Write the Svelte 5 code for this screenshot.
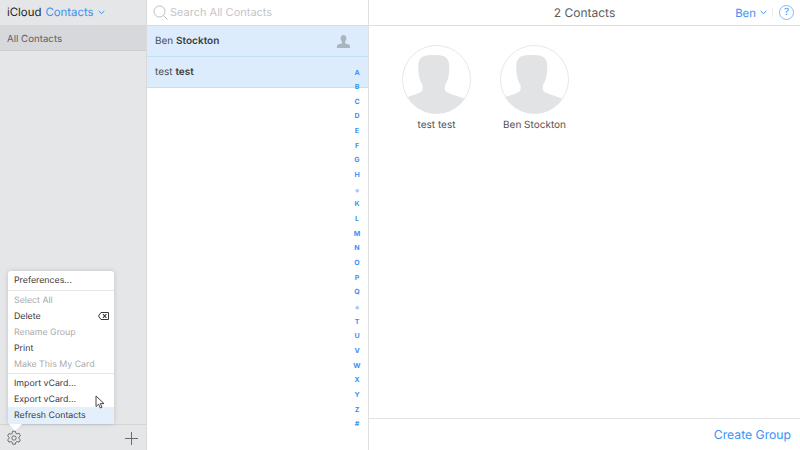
<script lang="ts">
const letters = ['A','B','C','D','E','F','G','H','•','K','L','M','N','O','P','Q','•','T','U','V','W','X','Y','Z','#'];

const menuGroups = [
	[{ label: 'Preferences...' }],
	[
		{ label: 'Select All', off: true },
		{ label: 'Delete', del: true },
		{ label: 'Rename Group', off: true },
		{ label: 'Print' },
		{ label: 'Make This My Card', off: true },
	],
	[{ label: 'Import vCard...' }, { label: 'Export vCard...' }, { label: 'Refresh Contacts', hover: true }],
];

const contacts = [
	{ first: 'Ben', last: 'Stockton', me: true },
	{ first: 'test', last: 'test', me: false },
];
const cards = ['test test', 'Ben Stockton'];
</script>

<div class="app">
	<aside class="sidebar">
		<div class="side-head">
			<span class="brand">iCloud</span>
			<span class="app-name">Contacts</span>
			<svg width="7" height="5" viewBox="0 0 7 5" fill="none" stroke="#3b91f5" stroke-width="1">
				<polyline points="0.7 1 3.5 3.6 6.3 1" />
			</svg>
		</div>
		<div class="group-row">All Contacts</div>
		<div class="side-space"></div>
		<div class="side-foot">
			<svg width="16" height="16" viewBox="0 0 16 16" fill="none" stroke="#5f6266" stroke-width="0.9">
				<path d="M6.6 1.2h2.8l.4 2 1.3.7 1.9-.7 1.4 2.4-1.5 1.3v1.6l1.5 1.3-1.4 2.4-1.9-.7-1.3.7-.4 2H6.600l-.4-2-1.3-.7-1.900.7-1.400-2.400 1.500-1.300V7.200L1.600 5.900 3 3.500l1.900.7 1.300-.7z" stroke-linejoin="round" />
				<circle cx="8" cy="8" r="2.200" />
			</svg>
			<svg width="13" height="13" viewBox="0 0 13 13" stroke="#6a6d70" stroke-width="1">
				<path d="M6.500 0v13M0 6.500h13" />
			</svg>
		</div>

		<div class="menu">
			{#each menuGroups as group}
				<div class="menu-group">
					{#each group as item}
						<div class="menu-item" class:off={item.off} class:hover={item.hover}>
							{item.label}
							{#if item.del}
								<svg width="11" height="8" viewBox="0 0 11 8" fill="none" stroke="#3a3a3c">
									<path d="M3 .5h7.500v7H3L.5 4z" stroke-width="1" stroke-linejoin="round" />
									<path d="M5 2.200l3.400 3.600M8.400 2.200L5 5.800" stroke-width="1.100" />
								</svg>
							{/if}
						</div>
					{/each}
				</div>
			{/each}
			<span class="menu-tail"></span>
		</div>
		<svg class="cursor" width="10" height="14" viewBox="0 0 10 14">
			<path d="M1 1v10.500l2.600-2.300 1.700 3.800 1.700-.8-1.700-3.600H9z" fill="#fff" stroke="#333" stroke-width="0.9" stroke-linejoin="round" />
		</svg>
	</aside>

	<section class="list">
		<div class="search">
			<svg width="15" height="15" viewBox="0 0 15 15" fill="none" stroke="#bcbec1" stroke-width="1">
				<circle cx="6.500" cy="6.500" r="5.500" />
				<path d="M10.500 10.500l4 4" />
			</svg>
			<span>Search All Contacts</span>
		</div>
		{#each contacts as c}
			<div class="row">
				<span>{c.first} <b>{c.last}</b></span>
				{#if c.me}
					<svg width="13" height="13" viewBox="0 0 13 13" fill="#a9b5bf">
						<path d="M6.500 0C8.300 0 9.400 1.300 9.400 3.300c0 1.500-.6 2.800-1.400 3.500v1.400c1.800.6 5 1 5 3V13H0v-1.800c0-2 3.200-2.400 5-3V6.800C4.200 6.100 3.600 4.800 3.600 3.300 3.600 1.300 4.700 0 6.500 0z" />
					</svg>
				{/if}
			</div>
		{/each}
		<div class="alpha">
			{#each letters as l}
				<span class:dot={l === '•'}>{l}</span>
			{/each}
		</div>
	</section>

	<main class="detail">
		<header class="detail-head">
			<span class="count">2 Contacts</span>
			<div class="user">
				<span>Ben</span>
				<svg width="7" height="5" viewBox="0 0 7 5" fill="none" stroke="#3b91f5" stroke-width="1">
					<polyline points="0.7 1 3.500 3.600 6.300 1" />
				</svg>
				<i class="divider"></i>
				<span class="help">?</span>
			</div>
		</header>
		<div class="cards">
			{#each cards as name, i}
				<div class="card">
					<svg width="69" height="69" viewBox="0 0 69 69">
						<defs>
							<clipPath id="round-{i}">
								<circle cx="34.500" cy="34.500" r="34" />
							</clipPath>
						</defs>
						<circle cx="34.500" cy="34.500" r="34" fill="#fff" stroke="#e6e7e8" stroke-width="1" />
						<path
							clip-path="url(#round-{i})"
							fill="#e2e3e5"
							d="M34.500 10c9 0 12.800 3.500 12.800 12 0 3-.2 5.500-.6 8-.6 4-2 7.500-3.700 10-.4 2.500-.2 4.500.5 6 2 2.500 11 4.500 20 8V69H0V54c9-3.500 18-5.500 20-8 .7-1.500.9-3.500.5-6-1.700-2.500-3.100-6-3.700-10-.4-2.500-.6-5-.6-8 0-8.500 3.800-12 12.800-12z"
						/>
					</svg>
					<span>{name}</span>
				</div>
			{/each}
		</div>
		<footer class="detail-foot">Create Group</footer>
	</main>
</div>

<style>
	:global(body) {
		margin: 0;
		background: #fff;
	}

	.app {
		display: flex;
		width: 800px;
		height: 450px;
		overflow: hidden;
		font-family: Inter, 'Liberation Sans', sans-serif;
		text-rendering: geometricPrecision;
		color: #3c3c3e;
	}

	.sidebar {
		position: relative;
		display: flex;
		flex-direction: column;
		flex: 0 0 146px;
		background: #e5e6e8;
		border-right: 1px solid #d9dadc;
	}

	.side-head {
		display: flex;
		align-items: center;
		gap: 4px;
		height: 26px;
		padding: 0 0 1px 7px;
		box-sizing: border-box;
		font-size: 11.400px;
		border-bottom: 1px solid #cfdbe4;
	}

	.brand {
		color: #1c1c1e;
	}

	.app-name {
		color: #3b91f5;
	}

	.group-row {
		height: 25px;
		padding: 1px 0 0 7px;
		box-sizing: border-box;
		line-height: 25px;
		font-size: 9.700px;
		color: #5d6064;
		background: #d6d8db;
		border-bottom: 1px solid #cdcfd2;
	}

	.side-space {
		flex: 1;
	}

	.side-foot {
		display: flex;
		align-items: center;
		justify-content: space-between;
		height: 26px;
		padding: 1px 8px 0 6px;
		box-sizing: border-box;
		border-top: 1px solid #d3d4d6;
	}

	.menu {
		position: absolute;
		left: 8px;
		bottom: 26px;
		width: 106px;
		background: #fff;
		border-radius: 3px;
		box-shadow: 0 0 5px rgba(0, 0, 0, 0.16);
		font-size: 8.800px;
		color: #3a3a3c;
		padding-top: 1px;
	}

	.menu-group {
		padding: 1px 0;
		border-bottom: 1px solid #e8e8e8;
	}

	.menu-group:first-child {
		padding: 0 0 2px;
	}

	.menu-group:last-of-type {
		border-bottom: none;
		padding: 2px 0 0;
	}

	.menu-item {
		display: flex;
		align-items: center;
		justify-content: space-between;
		height: 16px;
		padding: 0 5px 0 6px;
	}

	.menu-group:last-of-type .menu-item {
		height: 15.500px;
	}

	.menu-item.off {
		color: #aaaaac;
	}

	.menu-group:last-of-type .menu-item.hover {
		background: #e3f0fb;
		height: 17px;
		border-radius: 0 0 3px 3px;
	}

	.menu-tail {
		position: absolute;
		left: 1px;
		bottom: -7px;
		width: 0;
		height: 0;
		border-top: 7px solid #fff;
		border-left: 6px solid transparent;
		border-right: 7px solid transparent;
	}

	.cursor {
		position: absolute;
		left: 95px;
		top: 395px;
	}

	.list {
		position: relative;
		flex: 0 0 221px;
		background: #fff;
		border-right: 1px solid #dfe0e2;
	}

	.search {
		display: flex;
		align-items: center;
		gap: 2px;
		height: 26px;
		padding: 0 0 1px 6px;
		box-sizing: border-box;
		font-size: 11px;
		color: #c4c5c8;
		border-bottom: 1px solid #cfdce6;
	}

	.row {
		display: flex;
		align-items: center;
		justify-content: space-between;
		height: 30px;
		padding: 0 18px 0 8px;
		font-size: 10px;
		color: #4d4f52;
		background: #dcecfd;
		border-bottom: 1px solid #c4e0f5;
	}

	.row b {
		font-weight: 600;
		color: #3a3c3f;
	}

	.alpha {
		position: absolute;
		top: 65.500px;
		right: 5px;
		width: 12px;
		display: flex;
		flex-direction: column;
		align-items: center;
		font-size: 7px;
		font-weight: 700;
		color: #3b91f5;
	}

	.alpha span {
		height: 14.660px;
		line-height: 14.660px;
	}

	.alpha .dot {
		font-size: 11px;
		font-weight: 400;
		color: #a9cdf6;
	}

	.detail {
		flex: 1;
		display: flex;
		flex-direction: column;
	}

	.detail-head {
		position: relative;
		display: flex;
		align-items: center;
		justify-content: center;
		height: 25px;
		font-size: 12px;
		color: #5a5a5c;
		border-bottom: 1px solid #d5e2ec;
	}

	.user {
		position: absolute;
		right: 6px;
		top: 0;
		height: 25px;
		display: flex;
		align-items: center;
		gap: 4px;
		color: #3b91f5;
		font-size: 11.400px;
	}

	.divider {
		width: 1px;
		height: 9px;
		margin: 0 3px 0 1px;
		background: #eceded;
	}

	.help {
		width: 13px;
		height: 13px;
		line-height: 13px;
		text-align: center;
		border: 1px solid #85b9f5;
		border-radius: 50%;
		font-size: 10px;
		margin-left: -1px;
	}

	.cards {
		flex: 1;
		display: flex;
		gap: 29px;
		padding: 19px 0 0 33px;
		align-items: flex-start;
	}

	.card {
		width: 69px;
		display: flex;
		flex-direction: column;
		align-items: center;
		gap: 5px;
		font-size: 10px;
		color: #505255;
		white-space: nowrap;
	}

	.detail-foot {
		height: 30px;
		padding: 1px 9px 0 0;
		line-height: 29px;
		text-align: right;
		font-size: 12.200px;
		color: #3b91f5;
		border-top: 1px solid #e2e3e4;
	}
</style>
